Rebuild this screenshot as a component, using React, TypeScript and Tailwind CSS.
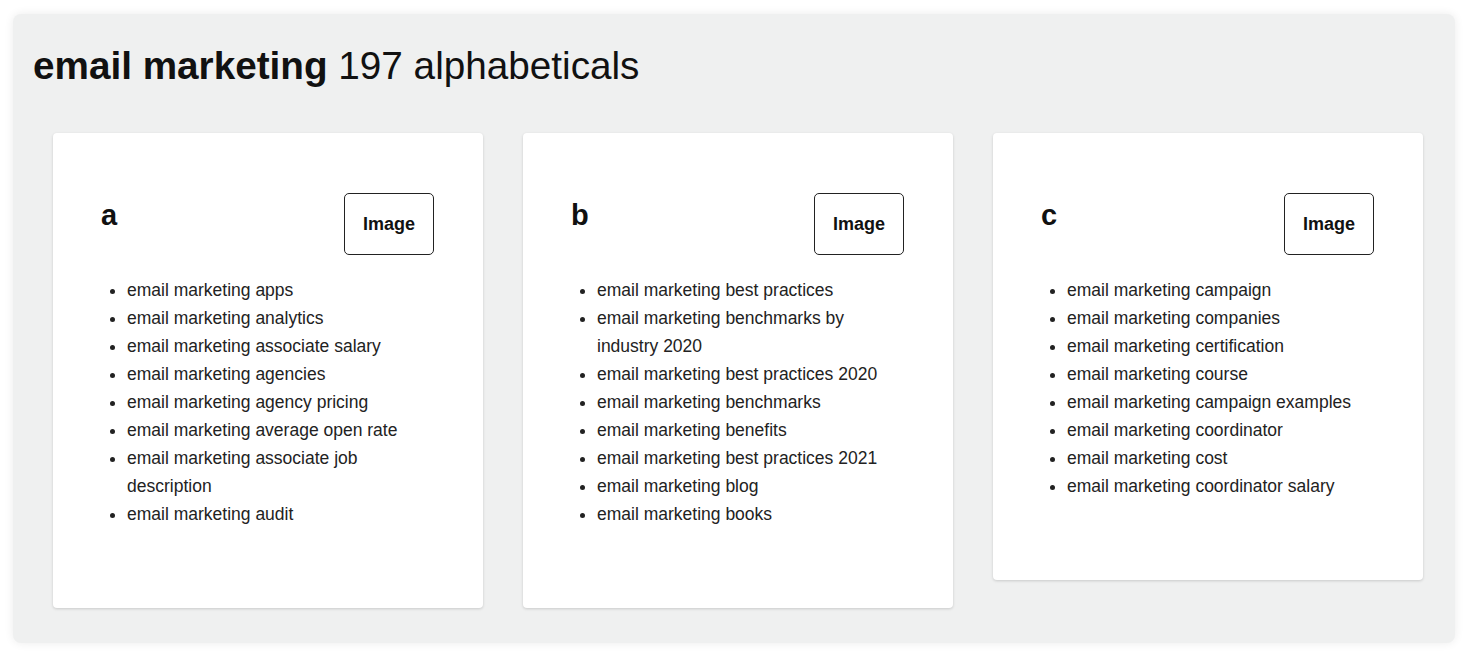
import React from 'react';

const groups = [
  {
    letter: 'a',
    items: [
      'email marketing apps',
      'email marketing analytics',
      'email marketing associate salary',
      'email marketing agencies',
      'email marketing agency pricing',
      'email marketing average open rate',
      'email marketing associate job description',
      'email marketing audit',
    ],
  },
  {
    letter: 'b',
    items: [
      'email marketing best practices',
      'email marketing benchmarks by industry 2020',
      'email marketing best practices 2020',
      'email marketing benchmarks',
      'email marketing benefits',
      'email marketing best practices 2021',
      'email marketing blog',
      'email marketing books',
    ],
  },
  {
    letter: 'c',
    items: [
      'email marketing campaign',
      'email marketing companies',
      'email marketing certification',
      'email marketing course',
      'email marketing campaign examples',
      'email marketing coordinator',
      'email marketing cost',
      'email marketing coordinator salary',
    ],
  },
];

function LetterCard({ letter, items }: { letter: string; items: string[] }) {
  return (
    <div className="bg-white rounded-[4px] shadow-[0_1px_3px_rgba(0,0,0,0.16)] pl-[48px] pr-[49px] pt-[60px] pb-[80px]">
      <div className="flex items-start justify-between">
        <h2 className="text-[29px] leading-[44px] font-bold text-[#111]">{letter}</h2>
        <button className="w-[90px] h-[62px] flex items-center justify-center border border-[#222] rounded-[5px] bg-white text-[18px] font-bold text-[#111]">
          Image
        </button>
      </div>
      <ul className="list-disc pl-[26px] mt-[21px] text-[17.5px] leading-[28px] text-[#222]">
        {items.map(item => (
          <li key={item}>{item}</li>
        ))}
      </ul>
    </div>
  );
}

export default function App() {
  return (
    <div className="min-h-screen bg-white pt-[14px] pl-[13px] font-['Liberation_Sans',Arial,sans-serif]">
      <div className="w-[1442px] bg-[#eff0f0] rounded-[8px] shadow-[0_0_10px_rgba(0,0,0,0.08)] pt-[29px] pb-[35px]">
        <h1 className="pl-[20px] text-[38.7px] leading-[46px] text-[#111]">
          <span className="font-bold">email marketing</span> 197 alphabeticals
        </h1>
        <div className="grid grid-cols-[430px_430px_430px] gap-x-[40px] items-start pl-[40px] mt-[44px]">
          {groups.map(g => (
            <LetterCard key={g.letter} letter={g.letter} items={g.items} />
          ))}
        </div>
      </div>
    </div>
  );
}
